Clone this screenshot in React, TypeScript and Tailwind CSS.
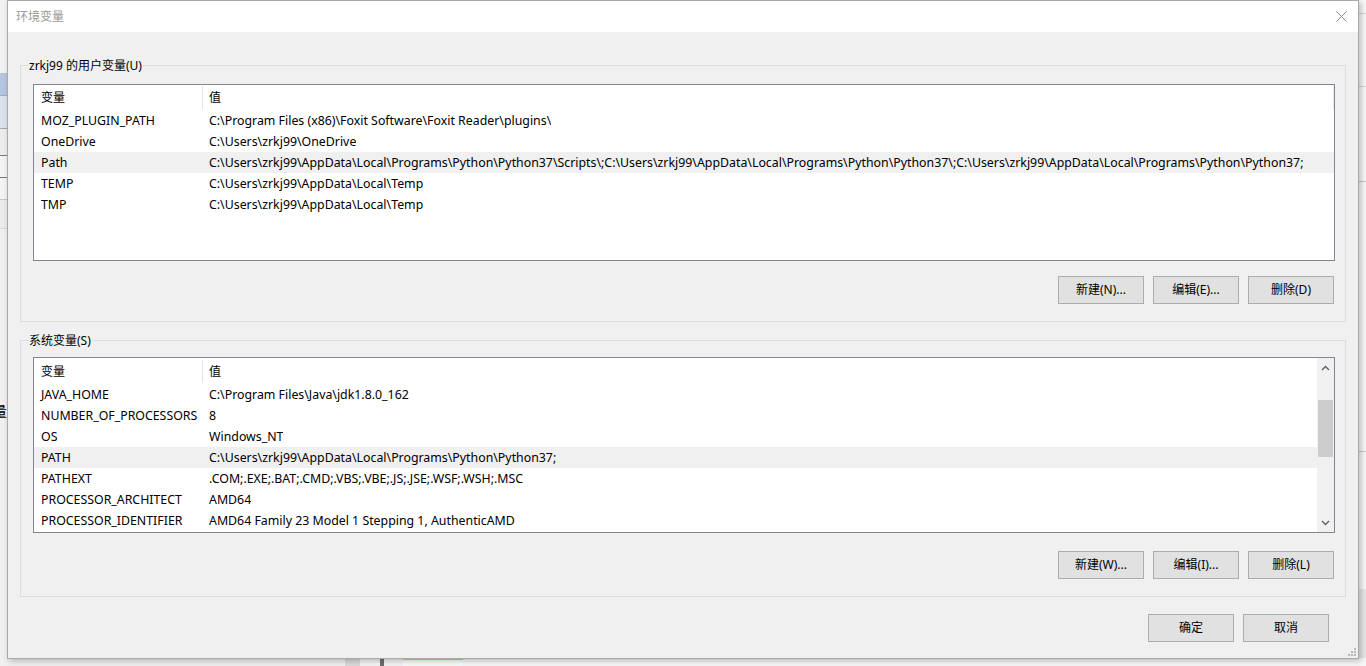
import React from "react";

type Row = { name: string; value: string; hl?: boolean };

const userRows: Row[] = [
  { name: "MOZ_PLUGIN_PATH", value: "C:\\Program Files (x86)\\Foxit Software\\Foxit Reader\\plugins\\" },
  { name: "OneDrive", value: "C:\\Users\\zrkj99\\OneDrive" },
  {
    name: "Path",
    value:
      "C:\\Users\\zrkj99\\AppData\\Local\\Programs\\Python\\Python37\\Scripts\\;C:\\Users\\zrkj99\\AppData\\Local\\Programs\\Python\\Python37\\;C:\\Users\\zrkj99\\AppData\\Local\\Programs\\Python\\Python37;",
    hl: true,
  },
  { name: "TEMP", value: "C:\\Users\\zrkj99\\AppData\\Local\\Temp" },
  { name: "TMP", value: "C:\\Users\\zrkj99\\AppData\\Local\\Temp" },
];

const sysRows: Row[] = [
  { name: "JAVA_HOME", value: "C:\\Program Files\\Java\\jdk1.8.0_162" },
  { name: "NUMBER_OF_PROCESSORS", value: "8" },
  { name: "OS", value: "Windows_NT" },
  { name: "PATH", value: "C:\\Users\\zrkj99\\AppData\\Local\\Programs\\Python\\Python37;", hl: true },
  { name: "PATHEXT", value: ".COM;.EXE;.BAT;.CMD;.VBS;.VBE;.JS;.JSE;.WSF;.WSH;.MSC" },
  { name: "PROCESSOR_ARCHITECT", value: "AMD64" },
  { name: "PROCESSOR_IDENTIFIER", value: "AMD64 Family 23 Model 1 Stepping 1, AuthenticAMD" },
];

function WinButton({ label }: { label: string }) {
  return (
    <div className="w-[86px] h-[28px] border border-[#adadad] bg-[#e1e1e1] flex items-center justify-center text-[12px] text-black">
      {label}
    </div>
  );
}

function ListBox({ rows, height, scroll }: { rows: Row[]; height: string; scroll?: boolean }) {
  return (
    <div className={`${height} w-[1302px] border border-[#828790] bg-white flex overflow-hidden`}>
      <div className={`flex-1 flex flex-col overflow-hidden ${scroll ? "pt-[1px]" : ""}`}>
        <div className="h-[25px] shrink-0 flex items-stretch">
          <div className="w-[168px] shrink-0 flex items-center pl-[7px]">变量</div>
          <div className="w-px bg-[#e5e5e5] my-[1px]" />
          <div className="flex-1 flex items-center pl-[6px]">值</div>
          {!scroll && <div className="w-px bg-[#e5e5e5] my-[1px]" />}
        </div>
        {rows.map((r) => (
          <div
            key={r.name}
            className={`h-[21px] shrink-0 flex items-center pt-[2px] text-[12.35px] ${r.hl ? "bg-[#f0f0f0]" : ""}`}
          >
            <div className="w-[168px] shrink-0 pl-[7px] whitespace-nowrap overflow-hidden">{r.name}</div>
            <div className="pl-[7px] whitespace-nowrap overflow-hidden">{r.value}</div>
          </div>
        ))}
      </div>
      {scroll && (
        <div className="w-[17px] shrink-0 bg-[#f0f0f0] flex flex-col items-center py-[1px]">
          <div className="h-[17px] w-full flex items-center justify-center">
            <svg width="9" height="6" viewBox="0 0 9 6">
              <polyline points="1,5 4.5,1.5 8,5" fill="none" stroke="#606060" strokeWidth="1.4" />
            </svg>
          </div>
          <div className="flex-1 w-full flex flex-col">
            <div className="h-[24px]" />
            <div className="h-[57px] mx-px bg-[#cdcdcd]" />
          </div>
          <div className="h-[17px] w-full flex items-center justify-center">
            <svg width="9" height="6" viewBox="0 0 9 6">
              <polyline points="1,1 4.5,4.5 8,1" fill="none" stroke="#606060" strokeWidth="1.4" />
            </svg>
          </div>
        </div>
      )}
    </div>
  );
}

function GroupBox({
  label,
  children,
  pt,
}: {
  label: string;
  children: React.ReactNode;
  pt: string;
}) {
  return (
    <div className={`relative h-[257px] border border-[#dcdcdc] ${pt} pl-[12px] pr-[10px] flex flex-col`}>
      <span className="absolute -top-[8px] left-[7px] px-[1px] bg-[#f0f0f0] leading-[16px]">{label}</span>
      {children}
    </div>
  );
}

export default function App() {
  return (
    <div className='relative w-[1366px] h-[666px] overflow-hidden bg-[#f0f0f0] text-[12px] text-black font-["Noto_Sans","Noto_Sans_CJK_SC",sans-serif]'>
      {/* background windows: left strip */}
      <div className="absolute left-0 top-0 w-[8px] h-[666px] flex flex-col">
        <div className="h-[73px] bg-[#f2f2f2]" />
        <div className="h-[23px] bg-[#b7c6e0] border-b border-[#9aaccc]" />
        <div className="h-[32px] bg-[#dde3ee]" />
        <div className="h-[27px] bg-[#ececec] border-t border-[#a8a8a8]" />
        <div className="h-[22px] bg-[#f4f4f4] border-t border-[#7a7a7a]" />
        <div className="h-[22px] bg-[#f4f4f4] border-t border-[#7a7a7a]" />
        <div className="h-[29px] bg-[#ebebeb] border-t border-[#c8c8c8]" />
        <div className="flex-1 bg-[#f0f0f0] border-t border-[#d8d8d8]" />
      </div>
      <div className="absolute left-0 top-[402px] w-[7px] overflow-hidden">
        <div className="-ml-[8px] text-[15px] leading-[18px] text-black">量</div>
      </div>
      {/* right strip */}
      <div className="absolute right-0 top-0 w-[8px] h-[666px] bg-[#f7f7f7] flex flex-col">
        <div className="h-[14px] border-b border-[#d6d6d6]" />
        <div className="h-[73px] border-b border-[#d6d6d6]" />
        <div className="h-[95px] border-b border-[#c8c8c8]" />
        <div className="h-[270px] border-b border-[#c8c8c8]" />
        <div className="h-[137px]" />
        <div className="flex-1 bg-[#e6e6e6]" />
      </div>
      {/* bottom strip */}
      <div className="absolute left-0 bottom-0 w-[1366px] h-[8px] flex">
        <div className="w-[345px] bg-[#f0f0f0]" />
        <div className="w-[15px] bg-[#dadada]" />
        <div className="w-[20px] bg-[#f4f4f4]" />
        <div className="w-[4px] bg-[#6f6f6f]" />
        <div className="w-[19px] bg-[#f4f4f4]" />
        <div className="w-[60px] bg-[#fbfbfb] border-t-2 border-[#f2c94c]" />
        <div className="flex-1 bg-[#f7f7f7]" />
      </div>

      {/* dialog window */}
      <div className="absolute left-[7px] top-0 w-[1352px] h-[659px] border border-[#a9a9a9] bg-[#f0f0f0] flex flex-col shadow-[2px_2px_6px_rgba(0,0,0,0.25)]">
        <div className="h-[31px] shrink-0 bg-white flex items-center justify-between pl-[8px] pr-[11px]">
          <span className="text-[#9a9a9a] text-[12px]">环境变量</span>
          <svg width="11" height="11" viewBox="0 0 11 11">
            <line x1="0.5" y1="0.5" x2="10.5" y2="10.5" stroke="#8a8a8a" strokeWidth="1" />
            <line x1="10.5" y1="0.5" x2="0.5" y2="10.5" stroke="#8a8a8a" strokeWidth="1" />
          </svg>
        </div>
        <div className="relative flex-1 px-[12px] pt-[33px] flex flex-col">
          <GroupBox label="zrkj99 的用户变量(U)" pt="pt-[18px]">
            <ListBox rows={userRows} height="h-[177px]" />
            <div className="mt-[15px] flex justify-end gap-[9px] pr-[1px]">
              <WinButton label="新建(N)..." />
              <WinButton label="编辑(E)..." />
              <WinButton label="删除(D)" />
            </div>
          </GroupBox>
          <div className="mt-[18px]">
            <GroupBox label="系统变量(S)" pt="pt-[16px]">
              <ListBox rows={sysRows} height="h-[176px]" scroll />
              <div className="mt-[18px] flex justify-end gap-[9px] pr-[1px]">
                <WinButton label="新建(W)..." />
                <WinButton label="编辑(I)..." />
                <WinButton label="删除(L)" />
              </div>
            </GroupBox>
          </div>
          <div className="mt-[17px] flex justify-end gap-[9px] pr-[17px]">
            <WinButton label="确定" />
            <WinButton label="取消" />
          </div>
          <svg className="absolute right-[2px] bottom-[2px]" width="8" height="8" viewBox="0 0 8 8">
            <rect x="6" y="0" width="2" height="2" fill="#b8b8b8" />
            <rect x="3" y="3" width="2" height="2" fill="#b8b8b8" />
            <rect x="6" y="3" width="2" height="2" fill="#b8b8b8" />
            <rect x="0" y="6" width="2" height="2" fill="#b8b8b8" />
            <rect x="3" y="6" width="2" height="2" fill="#b8b8b8" />
            <rect x="6" y="6" width="2" height="2" fill="#b8b8b8" />
          </svg>
        </div>
      </div>
    </div>
  );
}
